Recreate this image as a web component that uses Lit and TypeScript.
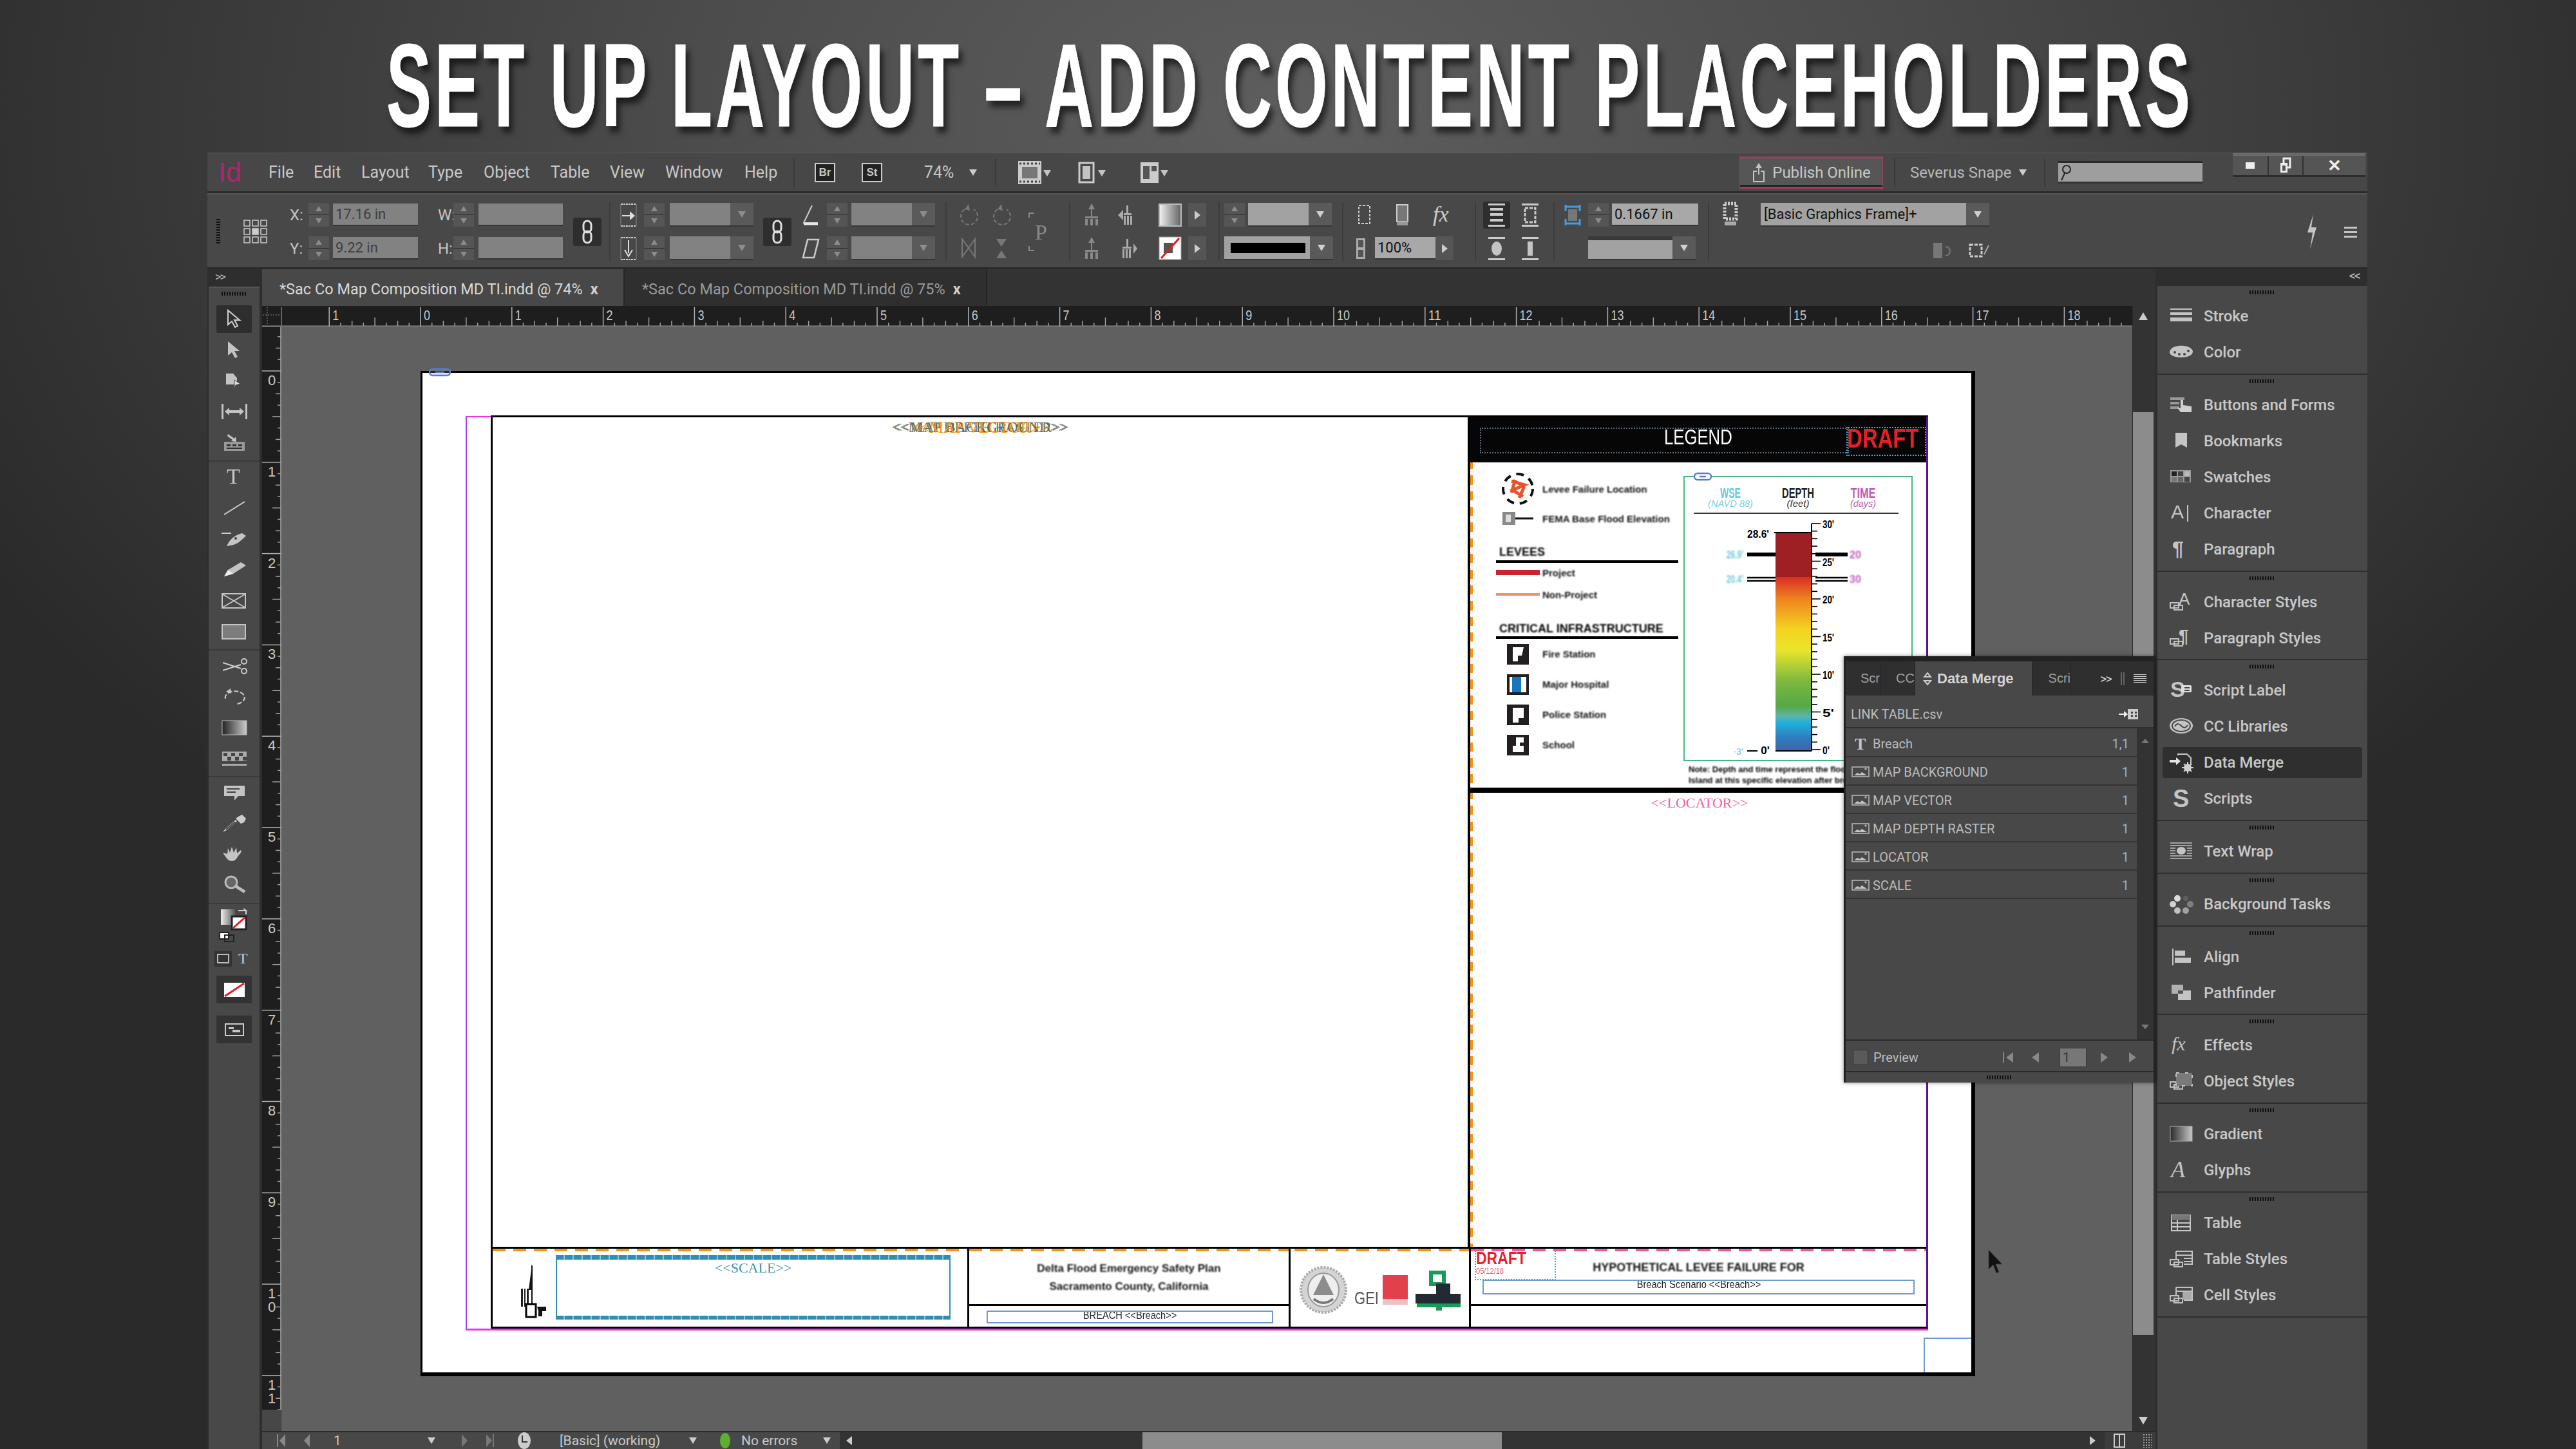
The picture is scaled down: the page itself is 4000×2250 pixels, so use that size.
import { LitElement, html, svg, css, nothing } from "lit";
import { customElement } from "lit/decorators.js";

const ic = (w: number, h: number, body: unknown) =>
  html`<svg class="ico" width=${w} height=${h} viewBox="0 0 ${w} ${h}">${body}</svg>`;

const sq = (x: number, y: number, w = 9, h = 7) =>
  svg`<rect x=${x} y=${y} width=${w} height=${h} fill="none" stroke="#c0c0c0" stroke-width="2"/>`;
const styleBoxes = svg`${sq(1, 15, 13, 8)}${sq(7, 19, 13, 7)}`;

const dockIcons: Record<string, unknown> = {
  stroke: svg`<rect x="1" y="2" width="34" height="2"/><rect x="1" y="8" width="34" height="4"/><rect x="1" y="16" width="34" height="6"/>`,
  color: svg`<path d="M0 13C2 5 14 3 22 4c9 1 14 5 14 9 0 6-9 9-18 9S-1 19 0 13z"/><g fill="#474747"><circle cx="8" cy="14" r="2"/><circle cx="15" cy="17" r="2"/><circle cx="23" cy="17" r="2"/><circle cx="29" cy="12" r="2"/></g>`,
  buttons: svg`<path d="M1 2h22v4H1zM1 9h14v4H1zM1 16h14v4H1z" fill="#999"/><path d="M17 6h4v8l13 2v9H17l-5-7 5 1z" fill="#d0d0d0"/>`,
  bookmark: svg`<path d="M9 1h18v23l-9-5-9 5z"/>`,
  swatches: svg`<rect x="1" y="3" width="32" height="19" fill="#999"/><rect x="3" y="5" width="8" height="7" fill="#222"/><rect x="13" y="5" width="8" height="7" fill="#444"/><rect x="23" y="5" width="8" height="7" fill="#bbb"/><rect x="3" y="14" width="8" height="7" fill="#777"/><rect x="13" y="14" width="8" height="7" fill="#666"/><rect x="23" y="14" width="8" height="7" fill="#444"/>`,
  character: svg`<text x="2" y="22" font-family="Liberation Sans" font-size="30">A</text><rect x="27" y="1" width="2" height="26"/>`,
  paragraph: svg`<text x="4" y="24" font-family="Liberation Sans" font-weight="700" font-size="32">¶</text>`,
  charstyle: svg`${styleBoxes}<text x="14" y="18" font-family="Liberation Sans" font-size="26">A</text>`,
  parastyle: svg`${styleBoxes}<text x="14" y="20" font-family="Liberation Sans" font-weight="700" font-size="28">¶</text>`,
  scriptlabel: svg`<text x="1" y="24" font-family="Liberation Sans" font-weight="700" font-size="34">S</text><rect x="18" y="6" width="16" height="11" rx="2" fill="#e0e0e0"/><rect x="23" y="9" width="8" height="2" fill="#474747"/><rect x="23" y="13" width="8" height="2" fill="#474747"/>`,
  cc: svg`<ellipse cx="18" cy="13" rx="18" ry="12"/><ellipse cx="18" cy="13" rx="14" ry="9" fill="none" stroke="#474747" stroke-width="2"/><path d="M8 14c4-6 7-4 10-1s6 5 10-1" fill="none" stroke="#474747" stroke-width="2"/>`,
  datamerge: svg`<path d="M0 10h10V6l7 6-7 6v-4H0z" fill="#e4e4e4"/><path d="M13 3V1h14l6 6v10" fill="none" stroke="#c8c8c8" stroke-width="2"/><circle cx="28" cy="22" r="6" fill="#d0d0d0"/><circle cx="28" cy="22" r="2" fill="#333"/><path d="M28 13v18M19 22h18M22 16l12 12M34 16L22 28" stroke="#d0d0d0" stroke-width="2"/>`,
  scripts: svg`<text x="5" y="27" font-family="Liberation Sans" font-weight="700" font-size="38">S</text>`,
  textwrap: svg`<g stroke="#c0c0c0" stroke-width="1.5"><path d="M1 1h34M1 5h34M1 9h8M27 9h8M1 13h8M27 13h8M1 17h8M27 17h8M1 21h34M1 25h34"/></g><ellipse cx="18" cy="13" rx="7" ry="6"/>`,
  tasks: svg`<circle cx="12" cy="5" r="5" fill="#dcdcdc"/><circle cx="25" cy="5" r="4" fill="#5f5f5f"/><circle cx="5" cy="14" r="5" fill="#d0d0d0"/><circle cx="32" cy="14" r="5" fill="#808080"/><circle cx="12" cy="24" r="5" fill="#c0c0c0"/><circle cx="25" cy="24" r="5" fill="#a0a0a0"/>`,
  align: svg`<rect x="4" y="1" width="2" height="26"/><rect x="8" y="4" width="16" height="8"/><rect x="8" y="15" width="25" height="8"/>`,
  pathfinder: svg`<rect x="3" y="1" width="18" height="14" fill="#b0b0b0"/><rect x="13" y="10" width="20" height="15" fill="#c4c4c4"/><rect x="13" y="10" width="8" height="5" fill="#555"/>`,
  fx: svg`<text x="3" y="22" font-family="Liberation Serif" font-style="italic" font-size="30">fx</text>`,
  objstyle: svg`${styleBoxes}<rect x="10" y="1" width="25" height="20" fill="#7a7a7a" stroke="#c0c0c0" stroke-dasharray="5 9" stroke-width="2"/>`,
  gradient: svg`<defs><linearGradient id="dg"><stop offset="0" stop-color="#2a2a2a"/><stop offset="1" stop-color="#c8c8c8"/></linearGradient></defs><rect x="1" y="2" width="34" height="23" fill="url(#dg)" stroke="#aaa"/>`,
  glyphs: svg`<text x="2" y="25" font-family="Liberation Serif" font-style="italic" font-size="36">A</text>`,
  table: svg`<rect x="3" y="2" width="29" height="24" fill="none" stroke="#c8c8c8" stroke-width="2"/><rect x="3" y="2" width="29" height="7" fill="#777"/><path d="M3 14h29M3 20h29M12 9v17" stroke="#c8c8c8" stroke-width="2"/>`,
  tablestyle: svg`${styleBoxes}<path d="M10 2h25v20H22M10 2v12M10 8h25M22 13h13M22 18h13" fill="none" stroke="#c0c0c0" stroke-width="2"/>`,
  cellstyle: svg`${styleBoxes}<path d="M10 2h25v20H22M10 2v12M10 8h25" fill="none" stroke="#c0c0c0" stroke-width="2"/><rect x="20" y="9" width="14" height="12" fill="#aaa"/>`,
};

const dockGroups: [string, string][][] = [
  [["stroke", "Stroke"], ["color", "Color"]],
  [["buttons", "Buttons and Forms"], ["bookmark", "Bookmarks"], ["swatches", "Swatches"], ["character", "Character"], ["paragraph", "Paragraph"]],
  [["charstyle", "Character Styles"], ["parastyle", "Paragraph Styles"]],
  [["scriptlabel", "Script Label"], ["cc", "CC Libraries"], ["datamerge", "Data Merge"], ["scripts", "Scripts"]],
  [["textwrap", "Text Wrap"]],
  [["tasks", "Background Tasks"]],
  [["align", "Align"], ["pathfinder", "Pathfinder"]],
  [["fx", "Effects"], ["objstyle", "Object Styles"]],
  [["gradient", "Gradient"], ["glyphs", "Glyphs"]],
  [["table", "Table"], ["tablestyle", "Table Styles"], ["cellstyle", "Cell Styles"]],
];

const toolGroups: unknown[][] = [
  [
    svg`<path d="M10 1v22l6-5 5 9 4-2-5-9h8z" fill="none" stroke="#d0d0d0" stroke-width="2"/>`,
    svg`<path d="M10 1v22l6-5 5 9 4-2-5-9h8z"/>`,
    svg`<path d="M7 3h11l6 7v10H7z"/><path d="M20 13l9 6-7 2-2 6z" fill="#ddd" stroke="#474747"/>`,
    svg`<rect x="0" y="2" width="3" height="24"/><rect x="37" y="2" width="3" height="24"/><path d="M5 14l7-6v4h16V8l7 6-7 6v-4H12v4z"/>`,
    svg`<path d="M4 13h32v14H4z" fill="#999"/><path d="M10 1l10 7 2-3 1 8-8-1 2-2L9 4z"/><path d="M8 17h6v3H8zM17 17h6v3h-6zM26 17h6v3h-6zM8 22h24v2H8z" fill="#333"/>`,
  ],
  [
    svg`<text x="8" y="25" font-family="Liberation Serif" font-size="34">T</text>`,
    svg`<path d="M4 25L36 5" stroke="#d0d0d0" stroke-width="2"/>`,
    svg`<path d="M0 6h15" stroke="#ccc" stroke-width="2"/><path d="M10 22c6-10 14-14 22-16l6 4c-6 6-14 14-24 15l-6 1z"/><circle cx="22" cy="14" r="2" fill="#474747"/>`,
    svg`<path d="M4 25l6-10L30 3l8 5-20 13z"/><path d="M4 25l6-10 8 6z" fill="#eee"/>`,
    svg`<rect x="1" y="4" width="36" height="22" fill="none" stroke="#c4c4c4" stroke-width="2"/><path d="M2 5l34 20M36 5L2 25" stroke="#c4c4c4" stroke-width="2"/>`,
    svg`<rect x="1" y="4" width="36" height="22" fill="#7c7c7c" stroke="#c4c4c4" stroke-width="2"/>`,
  ],
  [
    svg`<path d="M2 10l28 9M2 22l28-9" stroke="#ccc" stroke-width="2"/><circle cx="35" cy="8" r="4" fill="none" stroke="#ccc" stroke-width="2"/><circle cx="35" cy="23" r="4" fill="none" stroke="#ccc" stroke-width="2"/>`,
    svg`<path d="M6 18A15 10 0 1 1 24 26" fill="none" stroke="#ccc" stroke-width="2" stroke-dasharray="7 3"/><path d="M14 2l-7 5 8 3z"/>`,
    svg`<defs><linearGradient id="tg"><stop offset="0" stop-color="#222"/><stop offset="1" stop-color="#ccc"/></linearGradient></defs><rect x="1" y="4" width="38" height="22" fill="url(#tg)" stroke="#bbb"/>`,
    svg`<rect x="1" y="4" width="38" height="22" fill="#aaa"/><g fill="#444"><rect x="3" y="6" width="6" height="5"/><rect x="15" y="6" width="6" height="5"/><rect x="27" y="6" width="6" height="5"/><rect x="9" y="12" width="6" height="6"/><rect x="21" y="12" width="6" height="6"/><rect x="33" y="12" width="6" height="6"/><rect x="1" y="19" width="38" height="4"/></g>`,
  ],
  [
    svg`<path d="M4 4h32v16H26l-6 7V20H4z"/><path d="M8 9h20M8 14h14" stroke="#444" stroke-width="2"/>`,
    svg`<path d="M26 4l6-3 6 6-3 6-5 2-8-8zM22 9L6 23l-4 5 6-3 16-14" fill="#ccc"/><path d="M21 12L7 24" stroke="#474747" stroke-width="2"/>`,
    svg`<path d="M2 12l7 2 1-9 3 7 3-9 3 9 4-8 1 9 6-5c2 3-2 6-4 9-3 4-4 8-10 8-6 0-8-4-14-13z"/>`,
    svg`<circle cx="15" cy="10" r="9" fill="#666" stroke="#bbb" stroke-width="3"/><path d="M22 16l14 9" stroke="#bbb" stroke-width="5"/>`,
  ],
];

@customElement("id-panel")
export class IdPanel extends LitElement {
  static styles = css`
    :host {
      position: absolute;
      left: 2541px;
      top: 782px;
      width: 484px;
      height: 662px;
      background: #484848;
      border: solid #222;
      border-width: 8px 3px 0 3px;
      box-sizing: border-box;
      display: flex;
      flex-direction: column;
      font: 400 20px Roboto, sans-serif;
      color: #bcbcbc;
      box-shadow: 0 0 6px rgba(0, 0, 0, 0.5);
    }
    .tabs {
      height: 53px;
      background: #2f2f2f;
      display: flex;
      align-items: center;
      flex: none;
    }
    .tab {
      height: 100%;
      display: flex;
      align-items: center;
      justify-content: flex-end;
      box-sizing: border-box;
      overflow: hidden;
      border-right: 1px solid #242424;
      color: #a0a0a0;
      font-family: "Liberation Sans", sans-serif;
      font-size: 20px;
      white-space: nowrap;
    }
    .t1 { width: 54px; }
    .t2 { width: 54px; }
    .t3 { width: 182px; background: #484848; justify-content: flex-start; padding-left: 13px; gap: 9px; color: #d4d4d4; font-weight: 700; font-size: 22px; }
    .t4 { width: 60px; margin-right: 45px; }
    .more { color: #ccc; font-size: 20px; width: 24px; letter-spacing: -2px; }
    .bars { width: 2px; height: 20px; border-left: 2px solid #666; border-right: 2px solid #666; margin: 0 14px 0 8px; }
    .menu { width: 20px; height: 13px; background: repeating-linear-gradient(180deg, #ccc 0 1px, transparent 1px 3px); }
    .file {
      height: 51px;
      display: flex;
      align-items: center;
      justify-content: space-between;
      padding: 8px 24px 0 8px;
      border-bottom: 2px solid #2f2f2f;
      flex: none;
      box-sizing: border-box;
    }
    .body { flex: 1; display: flex; min-height: 0; }
    .list { flex: 1; padding-top: 1px; }
    .row {
      height: 44px;
      box-sizing: border-box;
      border-bottom: 2px solid #353535;
      display: grid;
      grid-template-columns: 33px 1fr auto;
      align-items: center;
      padding: 3px 12px 0 9px;
    }
    .row .ct { color: #8fb4d8; }
    .sb {
      width: 26px;
      background: #333;
      display: flex;
      flex-direction: column;
      justify-content: space-between;
      align-items: center;
      padding: 10px 0;
      box-sizing: border-box;
    }
    .up, .dn { width: 0; height: 0; border: 6px solid transparent; }
    .up { border-bottom: 7px solid #777; }
    .dn { border-top: 7px solid #777; }
    .foot {
      height: 51px;
      border-top: 2px solid #2a2a2a;
      border-bottom: 2px solid #2a2a2a;
      display: flex;
      align-items: center;
      padding: 4px 0 0 11px;
      flex: none;
      box-sizing: border-box;
    }
    .chk { width: 22px; height: 22px; background: #5a5a5a; border: 1px solid #2c2c2c; margin-right: 8px; flex: none; }
    .nav { display: grid; grid-template-columns: 44px 44px 62px 44px 40px; align-items: center; margin-left: 131px; }
    .pg { width: 42px; height: 30px; background: #777; border: 1px solid #3a3a3a; color: #333; font-size: 20px; padding-left: 4px; box-sizing: border-box; line-height: 28px; }
    .grip { height: 16px; display: flex; justify-content: center; align-items: center; flex: none; }
    .grip i { width: 40px; height: 6px; background: repeating-linear-gradient(90deg, #111 0 2px, transparent 2px 4px); }
    .ico { fill: #c4c4c4; display: block; overflow: visible; }
  `;

  render() {
    const img = ic(28, 17, svg`<rect x="1" y="1" width="26" height="15" fill="none" stroke="#bbb" stroke-width="1.5"/><path d="M4 14l5-4 4 2 3-3 8 5z"/><path d="M20 4h4M22 2v4" stroke="#ccc"/>`);
    const rows = ["MAP BACKGROUND", "MAP VECTOR", "MAP DEPTH RASTER", "LOCATOR", "SCALE"];
    return html`
      <div class="tabs">
        <div class="tab t1">Scr</div>
        <div class="tab t2">CC</div>
        <div class="tab t3">
          ${ic(12, 20, svg`<path d="M6 1l5 6H1zM6 19l5-6H1z" fill="none" stroke="#ccc" stroke-width="2"/>`)}Data Merge
        </div>
        <div class="tab t4">Scri</div>
        <span class="more">&gt;&gt;</span><i class="bars"></i><i class="menu"></i>
      </div>
      <div class="file">
        <span>LINK TABLE.csv</span>
        ${ic(30, 16, svg`<path d="M0 7h8V3l6 5-6 5V9H0z" fill="#eee"/><rect x="14" y="0" width="16" height="16" fill="#ccc"/><path d="M19 4h3v3h-3zM25 4h3v3h-3zM19 9h3v3h-3zM25 9h3v3h-3z" fill="#444"/>`)}
      </div>
      <div class="body">
        <div class="list">
          <div class="row">
            ${ic(28, 24, svg`<text x="5" y="21" font-family="Liberation Serif" font-weight="700" font-size="26">T</text>`)}
            <span>Breach</span><span class="ct">1,1</span>
          </div>
          ${rows.map((r) => html`<div class="row">${img}<span>${r}</span><span class="ct">1</span></div>`)}
        </div>
        <div class="sb"><i class="up"></i><i class="dn"></i></div>
      </div>
      <div class="foot">
        <i class="chk"></i><span>Preview</span>
        <div class="nav">
          ${ic(18, 16, svg`<rect width="2" height="16" fill="#888"/><path d="M16 0v16L5 8z" fill="#888"/>`)}
          ${ic(14, 16, svg`<path d="M12 0v16L1 8z" fill="#888"/>`)}
          <div class="pg">1</div>
          ${ic(14, 16, svg`<path d="M2 0v16l11-8z" fill="#888"/>`)}
          ${ic(18, 16, svg`<path d="M2 0v16l11-8z" fill="#888"/>`)}
        </div>
      </div>
      <div class="grip"><i></i></div>
    `;
  }
}

@customElement("map-sheet")
export class MapSheet extends LitElement {
  static styles = css`
    :host {
      display: block;
      width: 2414px;
      height: 1561px;
      box-sizing: border-box;
      background: #fff;
      border: solid #000;
      border-width: 3px 6px 6px 3px;
      position: relative;
      color: #000;
      font-family: "Liberation Sans", sans-serif;
    }
    .pagelink { position: absolute; left: 10px; top: -8px; }
    .corner { position: absolute; right: 0; bottom: 0; width: 72px; height: 52px; border: solid #6f9ad0; border-width: 2px 0 0 2px; }
    .guide {
      margin: 67px 0 0 67px;
      width: 2271px;
      height: 1420px;
      box-sizing: border-box;
      border: solid #f030e0;
      border-width: 2px 0 3px 0;
      border-left: 2px solid #a040ff;
      padding-left: 37px;
    }
    .frame {
      margin-top: -3px;
      width: 2232px;
      height: 1418px;
      box-sizing: border-box;
      border: 3px solid #000;
      border-right-color: #5a10a0;
      display: flex;
      flex-direction: column;
    }
    .top { height: 1288px; display: flex; border-bottom: 3px solid #000; flex: none; }
    .map { width: 1514px; border-right: 4px solid #000; display: grid; justify-items: center; align-content: start; padding-top: 2px; flex: none; }
    .map span { grid-area: 1 / 1; font: 23px "Liberation Serif", serif; white-space: nowrap; align-self: center; }
    .mbg { color: #4f6d60; }
    .mra { color: #7a7468; }
    .map .mve { color: #f7941d; font-size: 25px; }
    .right { flex: 1; display: flex; flex-direction: column; min-width: 0; }
    .lhead { height: 70px; background: #060606; position: relative; display: flex; justify-content: center; align-items: center; flex: none; }
    .lhead b { font: 400 33px "Liberation Sans", sans-serif; color: #fff; margin-top: -9px; transform: scaleX(0.78); }
    .draft { position: absolute; right: 12px; top: 12px; font: 700 42px/42px "Liberation Sans", sans-serif; color: #ee1c25; transform: scaleX(0.78); transform-origin: right center; }
    .dot1 { position: absolute; left: 15px; top: 16px; width: 569px; height: 36px; border: 2px dotted #5a6a78; }
    .dot2 { position: absolute; left: 584px; top: 15px; width: 124px; height: 45px; border: 2px dotted #28b4d8; box-sizing: border-box; }
    .lbody { height: 505px; display: flex; flex: none; border-left: 4px solid transparent; border-image: repeating-linear-gradient(180deg, #f7941d 0 14px, transparent 14px 24px) 4; overflow: hidden; }
    .lcol { width: 312px; padding: 18px 0 0 36px; box-sizing: border-box; flex: none; }
    .chart { margin-top: 13px; flex: none; }
    .lrow { display: flex; align-items: center; gap: 4px; height: 46px; }
    .lrow .sw { width: 68px; display: flex; justify-content: center; flex: none; }
    .bl { filter: blur(1.1px); font-weight: 700; font-size: 15px; white-space: nowrap; color: #111; }
    .lhd { font-weight: 700; font-size: 18px; border-bottom: 4px solid #000; padding-left: 5px; height: 27px; box-sizing: border-box; width: 283px; white-space: nowrap; }
    .lhd span { filter: blur(0.8px); display: block; }
    .m1 { margin-top: 19px; }
    .m2 { margin-top: 20px; height: 30px; padding-top: 4px; }
    .h30 { height: 30px; }
    .h38 { height: 38px; }
    .h47 { height: 47px; }
    .lbar { height: 8px; background: #000; flex: none; }
    .loc { flex: 1; display: flex; justify-content: center; padding-top: 3px; border-left: 4px solid transparent; border-image: repeating-linear-gradient(180deg, #f7941d 0 14px, transparent 14px 24px) 4; }
    .loc span { font: 22px "Liberation Serif", serif; color: #f0609c; }
    .bottom { flex: 1; display: flex; min-height: 0; position: relative; }
    .cell { flex: none; box-sizing: border-box; border-right: 3px solid #000; position: relative; }
    .cell::before { content: ""; display: block; height: 4px; margin-top: 0; background: repeating-linear-gradient(90deg, #f7941d 0 20px, transparent 20px 32px); }
    .pink::before { background: repeating-linear-gradient(90deg, #ee5aa0 0 20px, transparent 20px 32px); }
    .c1 { width: 740px; display: flex; flex-wrap: wrap; align-content: flex-start; }
    .c1::before { width: 100%; }
    .north { margin: 16px 0 0 30px; width: 68px; }
    .scale {
      width: 613px;
      height: 100px;
      margin-top: 6px;
      box-sizing: border-box;
      border: 2px solid #2e8fb0;
      border-top: 7px solid transparent;
      border-bottom: 6px solid transparent;
      border-image: repeating-linear-gradient(90deg, #2e8fb0 0 12px, #8cc4d8 12px 14px) 7 2 6 2;
      text-align: center;
      font: 22px "Liberation Serif", serif;
      color: #3a92b4;
    }
    .c2 { width: 499px; }
    .c3 { width: 280px; padding: 0 0 0 6px; display: flex; flex-direction: column; }
    .logos { filter: blur(0.4px); }
    .c4 { flex: 1; border-right: 0; }
    .cap { height: 82px; box-sizing: content-box; border-bottom: 3px solid #000; text-align: center; }
    .cap .bl { font-size: 17px; line-height: 28px; display: block; }
    .c2 .cap { padding-top: 13px; height: 69px; }
    .c4 .cap { padding-top: 13px; height: 69px; }
    .c4 .cap .bl { font-size: 18px; line-height: 24px; }
    .box { border: 2px solid #6f9ad0; text-align: center; font: 17px "Liberation Sans", sans-serif; overflow: hidden; box-sizing: border-box; color: #222; white-space: nowrap; }
    .box span { display: inline-block; transform: scaleX(0.86); }
    .b1 { width: 445px; height: 20px; margin: 7px 0 0 27px; position: relative; background: #fff; line-height: 12px; }
    .b2 { width: 671px; height: 23px; margin: -41px 0 0 18px; position: relative; line-height: 11px; }
    .stamp { position: absolute; left: 6px; top: 3px; width: 126px; height: 46px; border: 2px dotted #28b4d8; border-width: 0 2px 2px 2px; box-sizing: border-box; color: #ee1c25; }
    .stamp b { display: block; font: 700 27px/25px "Liberation Sans", sans-serif; transform: scaleX(0.85); transform-origin: left; }
    .stamp span { display: block; font: 13px/14px "Liberation Sans", sans-serif; color: #e85a70; transform: scaleX(0.85); transform-origin: left; }
  `;

  private chart() {
    const ticks = [];
    for (let i = 0; i <= 30; i++) {
      const y = 1163 - i * 11.7;
      const major = i % 5 === 0;
      ticks.push(svg`<path d="M2814 ${y}h${major ? 14 : 9}" stroke="#000" stroke-width="1.6"/>`);
      if (major) ticks.push(svg`<text x="2831" y=${y + 7} font-size="17" font-weight="700" textLength=${i ? 18 : 11} lengthAdjust="spacingAndGlyphs" text-anchor="start">${i}'</text>`);
    }
    const grad = [
      [0, "#d92d27"], [0.13, "#f0851e"], [0.3, "#f4d31f"], [0.42, "#e9e62a"], [0.6, "#7db83f"], [0.74, "#55a846"], [0.8, "#5cb3a5"], [0.84, "#1fb0dd"], [0.92, "#2f7fc0"], [1, "#3a64ab"],
    ];
    return html`<svg class="chart" width="391" height="492" viewBox="2600 730 391 492" font-family="Liberation Sans" text-anchor="middle">
      <defs><linearGradient id="rmp" x1="0" y1="0" x2="0" y2="1">${grad.map((g) => svg`<stop offset=${g[0]} stop-color=${g[1]}/>`)}</linearGradient></defs>
      <rect x="2616" y="739" width="354" height="441" fill="#fff" stroke="#44b97e" stroke-width="2"/>
      <g fill="none" stroke="#5a7ccc" stroke-width="2.5"><rect x="2632" y="734" width="26" height="10" rx="5" fill="#fff"/><path d="M2640 739h10"/></g>
      <g font-weight="700" font-size="22">
        <text x="2688" y="772" fill="#6bcad8" textLength="32" lengthAdjust="spacingAndGlyphs">WSE</text>
        <text x="2793" y="772" fill="#222" textLength="50" lengthAdjust="spacingAndGlyphs">DEPTH</text>
        <text x="2894" y="772" fill="#c25bb4" textLength="39" lengthAdjust="spacingAndGlyphs">TIME</text>
      </g>
      <g font-size="15" font-style="italic">
        <text x="2688" y="786" fill="#7ccedb" textLength="70" lengthAdjust="spacingAndGlyphs">(NAVD 88)</text>
        <text x="2793" y="786" fill="#333" textLength="35" lengthAdjust="spacingAndGlyphs">(feet)</text>
        <text x="2894" y="786" fill="#c25bb4" textLength="40" lengthAdjust="spacingAndGlyphs">(days)</text>
      </g>
      <path d="M2631 796h318" stroke="#333" stroke-width="2"/>
      <rect x="2758" y="826" width="56" height="69" fill="#9e2024"/>
      <rect x="2758" y="895" width="56" height="270" fill="url(#rmp)"/>
      <path d="M2814 812v353M2756 826h58M2758 1165h56" stroke="#000" stroke-width="2"/>
      ${ticks}
      <text x="2731" y="834" font-size="17" font-weight="700" textLength="34" lengthAdjust="spacingAndGlyphs">28.6'</text>
      <path d="M2714 860h44M2820 860h50" stroke="#000" stroke-width="6"/>
      <path d="M2714 896h44M2714 901h44M2820 896h50M2820 901h50" stroke="#000" stroke-width="2.5"/>
      <g style="filter:blur(.9px)" font-weight="700" font-size="16">
        <text x="2695" y="866" fill="#6bcad8" textLength="26" lengthAdjust="spacingAndGlyphs">26.9'</text>
        <text x="2695" y="904" fill="#6bcad8" textLength="26" lengthAdjust="spacingAndGlyphs">20.4'</text>
        <text x="2882" y="866" fill="#c25bb4">20</text>
        <text x="2882" y="904" fill="#c25bb4">30</text>
      </g>
      <text x="2700" y="1171" font-size="14" fill="#6bcad8">-3'</text>
      <path d="M2714 1165h16" stroke="#000" stroke-width="2"/>
      <text x="2742" y="1170" font-size="17" font-weight="700">0'</text>
      <g style="filter:blur(1px)" font-size="13" font-weight="700" text-anchor="start">
        <text x="2623" y="1198">Note: Depth and time represent the flood</text>
        <text x="2623" y="1215">Island at this specific elevation after breach</text>
      </g>
    </svg>`;
  }

  render() {
    const box = (inner: unknown, blue = false) => html`<svg width="34" height="32" viewBox="0 0 34 32">
      <rect width="34" height="32" fill="#231f20"/>
      ${blue ? svg`<rect x="4" y="4" width="26" height="24" fill="#fff"/><rect x="8" y="4" width="14" height="24" fill="#1b75bc"/>` : inner}
    </svg>`;
    return html`
      <svg class="pagelink" width="34" height="14" viewBox="0 0 34 14"><g fill="none" stroke="#5a7ccc" stroke-width="2.5"><rect x="1" y="2" width="32" height="10" rx="5" fill="#8a9ccc" fill-opacity=".25"/><path d="M10 7h14"/></g></svg>
      <div class="guide">
        <div class="frame">
          <div class="top">
            <div class="map">
              <span class="mra">&lt;&lt;MAP DEPTH RASTER&gt;&gt;</span>
              <span class="mbg">&lt;&lt;MAP BACKGROUND&gt;&gt;</span>
              <span class="mve">&lt;&lt;MAP VECTOR&gt;&gt;</span>
            </div>
            <div class="right">
              <div class="lhead">
                <i class="dot1"></i><i class="dot2"></i>
                <b>LEGEND</b><span class="draft">DRAFT</span>
              </div>
              <div class="lbody">
                <div class="lcol">
                  <div class="lrow">
                    <div class="sw">
                      <svg width="52" height="52" viewBox="0 0 52 52"><circle cx="26" cy="26" r="23" fill="none" stroke="#111" stroke-width="4" stroke-dasharray="12 9"/><path d="M16 14l20 6-18 8 16 10M22 12l-6 20M36 22l-8 18" fill="none" stroke="#e8532b" stroke-width="5"/></svg>
                    </div>
                    <span class="bl">Levee Failure Location</span>
                  </div>
                  <div class="lrow">
                    <div class="sw">
                      <svg width="48" height="20" viewBox="0 0 48 20"><rect width="20" height="20" fill="#888"/><rect x="5" y="4" width="8" height="12" fill="#ddd"/><path d="M20 10h28" stroke="#111" stroke-width="3"/></svg>
                    </div>
                    <span class="bl">FEMA Base Flood Elevation</span>
                  </div>
                  <div class="lhd m1"><span>LEVEES</span></div>
                  <div class="lrow h30"><div class="sw"><svg width="68" height="8"><rect width="68" height="8" fill="#c9252c"/></svg></div><span class="bl">Project</span></div>
                  <div class="lrow h38"><div class="sw"><svg width="68" height="4"><rect width="68" height="4" fill="#f0936f"/></svg></div><span class="bl">Non-Project</span></div>
                  <div class="lhd m2"><span>CRITICAL INFRASTRUCTURE</span></div>
                  <div class="lrow h47"><div class="sw">${box(svg`<path d="M9 5h17l-3 13h-6v9H9z" fill="#fff"/>`)}</div><span class="bl">Fire Station</span></div>
                  <div class="lrow h47"><div class="sw">${box(nothing, true)}</div><span class="bl">Major Hospital</span></div>
                  <div class="lrow h47"><div class="sw">${box(svg`<path d="M9 5h17v16h-8v7H9z" fill="#fff"/>`)}</div><span class="bl">Police Station</span></div>
                  <div class="lrow h47"><div class="sw">${box(svg`<path d="M14 4h12v8h-6v5h6v10H9V17h5z" fill="#fff"/>`)}</div><span class="bl">School</span></div>
                </div>
                ${this.chart()}
              </div>
              <div class="lbar"></div>
              <div class="loc"><span>&lt;&lt;LOCATOR&gt;&gt;</span></div>
            </div>
          </div>
          <div class="bottom">
            <div class="cell c1">
              <svg class="north" width="46" height="88" viewBox="0 0 46 88"><path d="M20 6v74" stroke="#111" stroke-width="2"/><path d="M20 4l-5 40h5z" fill="#111"/><path d="M3 42h3v28H3zM8 42h2v28H8zM12 42h3v28h-3z" fill="#222"/><rect x="11" y="66" width="15" height="20" fill="#fff" stroke="#000" stroke-width="3"/><path d="M28 70h14v7h-6v8h-6v-8z" fill="#111"/></svg>
              <div class="scale">&lt;&lt;SCALE&gt;&gt;</div>
            </div>
            <div class="cell c2">
              <div class="cap">
                <span class="bl">Delta Flood Emergency Safety Plan</span>
                <span class="bl">Sacramento County, California</span>
              </div>
              <div class="box b1"><span>BREACH &lt;&lt;Breach&gt;&gt;</span></div>
            </div>
            <div class="cell c3">
              <svg class="logos" width="270" height="100" viewBox="0 0 270 100">
                <ellipse cx="45" cy="60" rx="35" ry="35" fill="#d4d4d4" stroke="#aaa" stroke-width="4" stroke-dasharray="3 2"/>
                <ellipse cx="45" cy="60" rx="24" ry="26" fill="#eee" stroke="#999" stroke-width="2"/>
                <path d="M45 36l16 32H29z" fill="#8c8c8c"/><path d="M30 74c10 8 20 8 30 0" fill="none" stroke="#777" stroke-width="4"/>
                <text x="93" y="82" font-size="28" fill="#555" textLength="38" lengthAdjust="spacingAndGlyphs">GEI</text>
                <rect x="137" y="37" width="39" height="37" fill="#e2404a"/><rect x="137" y="74" width="39" height="9" fill="#eec0c0"/>
                <path d="M212 33h20v18h-20z" fill="none" stroke="#1a9a5a" stroke-width="6"/>
                <path d="M220 50h22v16h-22z" fill="#222a33"/><rect x="188" y="66" width="70" height="15" fill="#222a33"/>
                <rect x="190" y="81" width="68" height="6" fill="#1a9a5a"/><path d="M220 87h9v5h-9z" fill="#1a9a5a"/>
              </svg>
            </div>
            <div class="cell c4 pink">
              <div class="stamp"><b>DRAFT</b><span>05/12/18</span></div>
              <div class="cap"><span class="bl">HYPOTHETICAL LEVEE FAILURE FOR</span></div>
              <div class="box b2"><span>Breach Scenario &lt;&lt;Breach&gt;&gt;</span></div>
            </div>
          </div>
        </div>
      </div>
      <i class="corner"></i>
    `;
  }
}

@customElement("app-root")
export class AppRoot extends LitElement {
  static styles = css`
    :host {
      display: block;
      width: 4000px;
      height: 2250px;
      overflow: hidden;
      background: radial-gradient(ellipse 2300px 1500px at 2000px 180px, #5e5e5e 0%, #4c4c4c 40%, #2a2a2a 100%);
      font-family: Roboto, "Liberation Sans", sans-serif;
      color: #c8c8c8;
    }
    .banner { height: 237px; box-sizing: border-box; }
    .banner h1 {
      margin: 0 0 0 600px;
      width: 2798px;
      font: 700 184px/184px "Liberation Sans", sans-serif;
      letter-spacing: 9px;
      -webkit-text-stroke: 1px #fff;
      color: #fff;
      white-space: nowrap;
      padding-top: 40px;
      text-shadow: 10px 10px 12px rgba(0, 0, 0, 0.6);
      transform: scaleX(0.57);
      transform-origin: left top;
    }
    .win { margin-left: 322px; width: 3354px; height: 2013px; position: relative; background: #474747; display: flex; flex-direction: column; }

    /* menu bar */
    .menubar {
      height: 63px;
      box-sizing: border-box;
      border-bottom: 3px solid #2a2a2a;
      border-top: 1px solid #5a5a5a;
      display: grid;
      grid-template-columns: 76px 70px 74px 104px 86px 104px 92px 86px 123px 76px 33px 73px 97px 70px 40px 35px 93px 97px 931px 240px 25px 169px 39px 22px 271px 206px;
      padding-left: 19px;
      align-items: center;
      font-size: 25px;
      flex: none;
    }
    .idlogo { font: 400 43px "Liberation Sans", sans-serif; color: #b3246a; margin-left: -2px; }
    .msep { width: 2px; height: 44px; background: #3a3a3a; }
    .bridge { width: 32px; height: 30px; box-sizing: border-box; border: 2px solid #ccc; background: #222; color: #c8c8c8; font: 700 17px/26px "Liberation Sans", sans-serif; text-align: center; }
    .pub {
      width: 223px;
      height: 50px;
      box-sizing: border-box;
      border-top: 3px solid #a63a63;
      border-bottom: 3px solid #a63a63;
      border-left: 1px solid #a63a63;
      border-right: 1px solid #a63a63;
      box-shadow: inset 0 -3px 0 #222;
      background: #565656;
      display: flex;
      align-items: center;
      justify-content: center;
      gap: 10px;
      font-size: 24px;
      white-space: nowrap;
    }
    .user { font-size: 24px; color: #b8b8b8; white-space: nowrap; }
    .search { width: 221px; background: #9e9e9e; border-top: 3px solid #2a2a2a; border-bottom: 3px solid #333; box-sizing: content-box; display: flex; align-items: center; padding-left: 3px; height: 29px; }
    .winctl { align-self: start; margin-top: -1px; width: 206px; height: 38px; background: #555; border-bottom: 3px solid #2c2c2c; display: grid; grid-template-columns: 56px 54px 1fr; box-sizing: border-box; border-top: 5px solid #6a6a6a; }
    .winctl > div { display: flex; align-items: center; justify-content: center; border-right: 2px solid #333; color: #eee; font-size: 26px; font-weight: 700; }
    .winctl > .close { border-right: 0; }

    /* control bar */
    .ctl {
      height: 118px;
      box-sizing: border-box;
      border-bottom: 3px solid #2a2a2a;
      border-top: 2px solid #565656;
      background: #484848;
      padding: 13px 0 0 13px;
      display: grid;
      grid-auto-flow: column;
      grid-template-rows: 37px 37px;
      row-gap: 15px;
      grid-template-columns: 43px 72px 29px 38px 163px 24px 39px 147px 56px 17px 37px 40px 145px 60px 39px 38px 146px 22px 51px 56px 63px 20px 55px 64px 46px 47px 9px 183px 21px 185px 13px 52px 57px 16px 38px 186px 25px 57px 369px 477px 60px 30px;
      align-items: center;
      font-size: 22px;
      flex: none;
    }
    .s2 { grid-row: span 2; }
    .sep { width: 2px; height: 92px; background: #3c3c3c; }
    .lbl { font-size: 24px; color: #c4c4c4; }
    .step { width: 32px; height: 37px; display: flex; flex-direction: column; gap: 1px; background: #2e2e2e; }
    .step i { flex: 1; background: #555; display: flex; align-items: center; justify-content: center; }
    .step i::after { content: ""; border: 5px solid transparent; }
    .step .u::after { border-bottom: 8px solid #8c8c8c; border-top: 0; }
    .step .d::after { border-top: 8px solid #8c8c8c; border-bottom: 0; }
    .fld { height: 33px; width: 128px; background: #828282; border-bottom: 2px solid #353535; padding-left: 4px; box-sizing: content-box; display: flex; align-items: center; color: #3e3e3e; font-size: 22px; white-space: nowrap; }
    .fld.w { width: 131px; padding: 0; }
    .fld.on { background: #a8a8a8; color: #111; width: 130px; }
    .fld.pct { width: 94px; }
    .inline { display: flex; gap: 5px; align-items: center; }
    .sel { height: 35px; display: flex; border-bottom: 2px solid #353535; width: 130px; background: #5a5a5a; }
    .sel.lt > div:first-child { background: #a2a2a2; }
    .sel > div:first-child { flex: 1; background: #828282; color: #111; font-size: 22px; padding-left: 5px; display: flex; align-items: center; white-space: nowrap; overflow: hidden; }
    .sel > i { width: 36px; display: flex; align-items: center; justify-content: center; }
    .sel > i::after { content: ""; border: 6px solid transparent; border-top: 10px solid #cfcfcf; border-bottom: 0; }
    .sel.dm > i::after { border-top-color: #8c8c8c; }
    .sel.w169 { width: 169px; }
    .sel.w167 { width: 167px; }
    .sel.w355 { width: 355px; }
    .sel > div.rule { box-shadow: inset 0 6px 0 #3a3a3a; }
    .chain { width: 44px; height: 44px; background: #2e2e2e; border-radius: 3px; display: flex; align-items: center; justify-content: center; }
    .swatch { width: 36px; height: 36px; background: linear-gradient(90deg, #eee, #666); box-sizing: border-box; border: 2px solid #bbb; }
    .arrbtn { width: 28px; height: 37px; background: #555; display: flex; align-items: center; justify-content: center; }
    .arrbtn::after { content: ""; border: 7px solid transparent; border-left: 9px solid #ccc; border-right: 0; }
    .arrbtn.pull { margin-left: -18px; }
    .ico { fill: #c4c4c4; display: block; overflow: visible; }
    .selbg { background: #2e2e2e; border-radius: 3px; width: 42px; height: 42px; display: flex; align-items: center; justify-content: center; }
    .ibox { width: 42px; height: 42px; display: flex; align-items: center; justify-content: center; }
    .kfill { display: block; width: 116px; height: 16px; background: #000; margin-left: 5px; }
    .fxrow { display: flex; align-items: center; gap: 32px; padding-left: 2px; }
    .pctrow { display: flex; align-items: center; gap: 14px; }
    .endrow { display: flex; align-items: center; justify-content: flex-end; gap: 20px; width: 355px; padding-top: 6px; }

    /* main area */
    .main { flex: 1; display: flex; min-height: 0; }
    .left { width: 85px; background: #2e2e2e; padding-left: 2px; flex: none; display: flex; flex-direction: column; box-sizing: border-box; }
    .lefthead { height: 27px; color: #bbb; font-size: 18px; padding-left: 10px; letter-spacing: -2px; line-height: 24px; flex: none; }
    .tools { width: 79px; flex: 1; background: #484848; display: flex; flex-direction: column; align-items: center; border-top: 2px solid #555; box-sizing: border-box; }
    .grip { width: 40px; height: 6px; flex: none; background: repeating-linear-gradient(90deg, #111 0 2px, transparent 2px 4px); }
    .tools > .grip { margin: 6px 0 13px; }
    .tg { width: 100%; display: flex; flex-direction: column; align-items: center; border-bottom: 2px solid #3a3a3a; padding-bottom: 3px; }
    .tool { width: 55px; height: 48px; display: flex; align-items: center; justify-content: center; flex: none; }
    .tool.on { background: #2e2e2e; height: 43px; margin: 2px 0 3px; border-radius: 2px; }
    .fs { height: 100px; width: 100%; }
    .dbox { width: 55px; height: 43px; background: #333; display: flex; align-items: center; justify-content: center; margin-top: 19px; flex: none; }
    .dbox.first { margin-top: 11px; }

    .center { flex: 1; display: flex; flex-direction: column; min-width: 0; }
    .tabs { height: 57px; background: #333; display: flex; flex: none; }
    .tab { width: 563px; height: 100%; display: flex; align-items: center; gap: 12px; padding: 4px 0 0 27px; box-sizing: border-box; font-size: 23.5px; white-space: nowrap; color: #9a9a9a; background: #2f2f2f; border-right: 2px solid #262626; }
    .tab.on { background: #484848; color: #d8d8d8; }
    .tab b { color: #d0d0d0; }
    .doc { flex: 1; display: flex; min-height: 0; }
    .docl { width: 2904px; display: flex; flex-direction: column; flex: none; }
    .hr { height: 33px; background: #1e1e1e; flex: none; display: block; }
    .work { flex: 1; display: flex; min-height: 0; }
    .vr { width: 30px; background: #1e1e1e; flex: none; display: block; }
    .canvas { flex: 1; background: #606060; padding: 68px 0 0 216px; position: relative; overflow: hidden; min-width: 0; }
    .cursor { position: absolute; left: 2648px; top: 1432px; }
    .vs { width: 36px; background: #333; border-left: 1px solid #2a2a2a; flex: none; box-sizing: border-box; padding-right: 3px; position: relative; }
    .vs .thumb { position: absolute; left: 0; right: 3px; top: 165px; height: 1433px; background: #8c8c8c; }
    .vs i { position: absolute; left: 9px; border: 7px solid transparent; }
    .vs .up { top: 10px; border-bottom: 12px solid #ccc; border-top: 0; }
    .vs .dn { bottom: 10px; border-top: 12px solid #ccc; border-bottom: 0; }
    .status { height: 28px; display: flex; background: #333; flex: none; border-top: 2px solid #2a2a2a; box-sizing: border-box; }
    .sl {
      width: 897px;
      background: #484848;
      display: grid;
      grid-template-columns: 40px 48px 146px 52px 38px 49px 66px 201px 48px 33px 127px 26px;
      padding-left: 23px;
      box-sizing: border-box;
      align-items: center;
      font-size: 21px;
      flex: none;
      white-space: nowrap;
    }
    .strack { flex: 1; display: flex; align-items: center; position: relative; }
    .sthumb { position: absolute; left: 470px; width: 558px; top: 0; bottom: 0; background: #8c8c8c; }
    .sr { width: 79px; background: #3c3c3c; display: flex; align-items: center; justify-content: space-between; padding: 0 6px 0 12px; box-sizing: border-box; flex: none; }
    .sgrip { width: 14px; height: 22px; background: radial-gradient(circle, #999 1px, transparent 1.2px) 0 0 / 4px 4px; }
    .tri-l { border: 7px solid transparent; border-right: 9px solid #ccc; border-left: 0; margin-left: 10px; }
    .tri-r { border: 7px solid transparent; border-left: 9px solid #ccc; border-right: 0; margin-left: auto; margin-right: 14px; }
    .tri-d { border: 6px solid transparent; border-top: 10px solid #ccc; border-bottom: 0; justify-self: start; }
    .dot { width: 16px; height: 24px; border-radius: 50%; background: #5cb030; }
    .right { width: 329px; background: #2e2e2e; flex: none; display: flex; flex-direction: column; }
    .righthead { height: 26px; text-align: right; padding-right: 12px; font-size: 20px; line-height: 20px; color: #bbb; letter-spacing: -2px; flex: none; }
    .dock { flex: 1; background: #484848; margin-left: 3px; }
    .group { border-bottom: 2px solid #2f2f2f; padding: 7px 0 4.75px; display: flex; flex-direction: column; box-sizing: border-box; }
    .group > .grip { align-self: center; margin-bottom: 6px; }
    .item { height: 56px; display: grid; grid-template-columns: 36px 1fr; gap: 17px; align-items: center; padding-left: 19px; font-size: 24px; font-weight: 500; color: #c8c8c8; white-space: nowrap; flex: none; }
    .item.on { background: #2f2f2f; border-radius: 4px; margin: 4px 8px; padding-left: 11px; height: 48px; }
  `;

  private renderHRuler() {
    const w = 2904, origin = 246, step = 141.8, parts = [];
    parts.push(svg`<path d="M0 31.5H${w}" stroke="#8a8a8a" stroke-width="2"/><path d="M8 2v28M1 14h28" stroke="#888" stroke-dasharray="2 2"/><path d="M30 2v30" stroke="#aaa"/>`);
    for (let i = -1; i <= 18; i++) {
      const x = origin + i * step;
      parts.push(svg`<path d="M${x} 2V32" stroke="#b0b0b0" stroke-width="1.5"/><text x=${x + 5} y="22" font-size="22" fill="#c8c8c8" font-family="Liberation Sans" textLength=${Math.abs(i) > 9 ? 20 : 10} lengthAdjust="spacingAndGlyphs">${Math.abs(i)}</text>`);
      for (let k = 1; k < 8; k++) {
        const h = k === 4 ? 13 : k % 2 === 0 ? 8 : 5;
        const px = x + (k * step) / 8;
        if (px < w) parts.push(svg`<path d="M${px} 31V${31 - h}" stroke="#a0a0a0" stroke-width="1.5"/>`);
      }
    }
    return html`<svg class="hr" width=${w} height="33" viewBox="0 0 ${w} 33">${parts}</svg>`;
  }

  private renderVRuler() {
    const h = 1681, origin = 68, step = 141.8, parts = [];
    parts.push(svg`<path d="M29 0V${h}" stroke="#8a8a8a" stroke-width="2"/>`);
    for (let i = 0; i <= 11; i++) {
      const y = origin + i * step;
      parts.push(svg`<path d="M0 ${y}H30" stroke="#b0b0b0" stroke-width="1.5"/>`);
      [...String(i)].forEach((c, n) => parts.push(svg`<text x="9" y=${y + 22 + n * 21} font-size="22" fill="#c8c8c8" font-family="Liberation Sans">${c}</text>`));
    }
    for (let i = -1; i <= 11; i++) {
      for (let k = 1; k < 8; k++) {
        const l = k === 4 ? 13 : k % 2 === 0 ? 8 : 5;
        const y = origin + i * step + (k * step) / 8;
        if (y > 0 && y < h) parts.push(svg`<path d="M29 ${y}H${29 - l}" stroke="#a0a0a0" stroke-width="1.5"/>`);
      }
    }
    return html`<svg class="vr" width="30" height=${h} viewBox="0 0 30 ${h}">${parts}</svg>`;
  }

  private renderMenu() {
    const items = ["File", "Edit", "Layout", "Type", "Object", "Table", "View", "Window", "Help"];
    return html`<div class="menubar">
      <span class="idlogo">Id</span>
      ${items.map((m) => html`<span>${m}</span>`)}
      <i class="msep"></i>
      <div class="bridge">Br</div>
      <div class="bridge">St</div>
      <span>74%</span>
      <i class="tri-d"></i>
      <i class="msep"></i>
      ${ic(52, 40, svg`<rect x="1" y="2" width="36" height="36" fill="#ccc"/><rect x="7" y="11" width="24" height="18" fill="#777"/><path d="M3 6h32M3 34h32" stroke="#444" stroke-width="3" stroke-dasharray="3 3"/><path d="M40 16h12l-6 10z"/>`)}
      ${ic(48, 40, svg`<rect x="3" y="5" width="22" height="30" fill="none" stroke="#ccc" stroke-width="3"/><rect x="8" y="10" width="12" height="20"/><path d="M32 16h12l-6 10z"/>`)}
      ${ic(48, 40, svg`<rect x="1" y="4" width="28" height="32" fill="#ccc"/><rect x="5" y="10" width="10" height="20" fill="#555"/><rect x="18" y="10" width="8" height="8" fill="#555"/><path d="M32 16h12l-6 10z"/>`)}
      <div class="pub">
        ${ic(22, 30, svg`<path d="M11 0l5 8h-4v10h-2V8H6zM2 12h6v2H4v14h14V14h-4v-2h6v18H2z"/>`)}Publish Online
      </div>
      <i class="msep"></i>
      <span class="user">Severus Snape</span>
      <i class="tri-d"></i>
      <i class="msep"></i>
      <div class="search">${ic(18, 26, svg`<circle cx="10" cy="8" r="6" fill="none" stroke="#222" stroke-width="2"/><path d="M7 14L2 25" stroke="#222" stroke-width="2"/>`)}</div>
      <div class="winctl">
        <div>${ic(16, 12, svg`<rect x="1" y="1" width="14" height="10" fill="#eee"/>`)}</div>
        <div>${ic(18, 24, svg`<rect x="6" y="1" width="10" height="14" fill="none" stroke="#eee" stroke-width="3"/><rect x="1" y="8" width="11" height="15" fill="#eee"/><rect x="4" y="12" width="5" height="8" fill="#555"/>`)}</div>
        <div class="close">✕</div>
      </div>
    </div>`;
  }

  private renderControls() {
    const step = html`<div class="step"><i class="u"></i><i class="d"></i></div>`;
    const fld = (v = "") => html`<div class="fld">${v}</div>`;
    const sel = (t: unknown = "", cls = "") => html`<div class="sel ${cls}"><div>${t}</div><i></i></div>`;
    const chain = html`<div class="chain s2">${ic(16, 36, svg`<rect x="2" y="1" width="12" height="18" rx="6" fill="none" stroke="#ddd" stroke-width="3"/><rect x="2" y="17" width="12" height="18" rx="6" fill="none" stroke="#ddd" stroke-width="3"/>`)}</div>`;
    const sep = html`<i class="sep s2"></i>`;
    const ref = [];
    for (let r = 0; r < 3; r++) for (let c = 0; c < 3; c++) ref.push(svg`<rect x=${1 + c * 13} y=${1 + r * 13} width="9" height="9" fill=${r === 1 && c === 1 ? "#ccc" : "none"} stroke="#ccc" stroke-width="1.5"/>`);
    const rot = ic(28, 34, svg`<path d="M8 8A13 13 0 1 0 22 8" fill="none" stroke="#777" stroke-width="2" stroke-dasharray="6 3"/><path d="M14 0l-6 8 8 2z" fill="#777"/>`);
    const tree = ic(30, 36, svg`<path d="M15 0l5 9H10zM14 9h2v12h-2zM5 20h20v3H5zM5 24h4v10H5zM13 24h4v10h-4zM21 24h4v10h-4z" fill="#888"/>`);
    return html`<div class="ctl">
      <div class="s2">${ic(8, 40, svg`<path d="M4 0v40" stroke="#111" stroke-width="6" stroke-dasharray="2 2"/>`)}</div>
      <div class="s2">${ic(38, 38, ref)}</div>
      <span class="lbl">X:</span><span class="lbl">Y:</span>
      ${step}${step}
      ${fld("17.16 in")}${fld("9.22 in")}
      <span class="lbl">W:</span><span class="lbl">H:</span>
      ${step}${step}
      <div class="fld w"></div><div class="fld w"></div>
      ${chain}
      ${sep}
      ${ic(26, 36, svg`<path d="M1 1h24M1 35h24" stroke="#ccc" stroke-width="2" stroke-dasharray="3 1"/><path d="M1 1v34M25 1v34" stroke="#888"/><path d="M3 18h12v-6l8 7-8 7v-6H3z" fill="#ddd"/>`)}
      ${ic(26, 36, svg`<path d="M1 1h24M1 35h24" stroke="#ccc" stroke-width="2" stroke-dasharray="3 1"/><path d="M1 1v34M25 1v34" stroke="#888"/><path d="M13 5v20M7 20l6 10 6-10" stroke="#ddd" stroke-width="2" fill="none"/>`)}
      ${step}${step}
      ${sel("", "dm")}${sel("", "dm")}
      ${chain}
      ${ic(28, 32, svg`<path d="M16 1L3 28h22" fill="none" stroke="#ccc" stroke-width="2"/><path d="M3 30h22" stroke="#eee" stroke-width="3"/>`)}
      ${ic(28, 32, svg`<path d="M9 2h17L19 30H2z" fill="none" stroke="#ccc" stroke-width="2.5"/>`)}
      ${step}${step}
      ${sel("", "dm")}${sel("", "dm")}
      ${sep}
      ${rot}${ic(28, 34, svg`<path d="M4 2l10 14L4 30zM24 2L14 16l10 14z" fill="none" stroke="#777" stroke-width="2"/>`)}
      ${rot}${ic(28, 34, svg`<path d="M6 2h16l-8 12zM6 32h16l-8-12z" fill="#777"/>`)}
      <div class="s2">${ic(40, 60, svg`<path d="M1 8V1h8M1 52v7h8" fill="none" stroke="#888" stroke-width="2"/><text x="10" y="42" font-size="34" font-family="Liberation Serif" fill="#888">P</text>`)}</div>
      ${sep}
      ${tree}${tree}
      ${ic(36, 34, svg`<path d="M1 17l8-8v16zM14 2h3v12h-3zM10 14h12v3H10zM10 18h3v14h-3zM15 18h3v14h-3zM20 18h3v14h-3z" fill="#aaa"/>`)}
      ${ic(36, 34, svg`<path d="M31 17l-6-8v16zM14 2h3v12h-3zM8 14h14v3H8zM8 18h3v14H8zM13 18h3v14h-3zM18 18h3v14h-3z" fill="#aaa"/>`)}
      <div class="swatch"></div>
      ${ic(36, 37, svg`<rect x="1" y="1" width="34" height="35" fill="#fff" stroke="#999"/><rect x="8" y="10" width="14" height="16" fill="#555"/><path d="M4 34L32 3" stroke="#e21b1b" stroke-width="3"/>`)}
      <i class="arrbtn"></i><i class="arrbtn"></i>
      ${sep}
      <div class="inline">${step}${sel("", "lt")}</div>
      <div class="sel lt w169"><div><i class="kfill"></i></div><i></i></div>
      ${sep}
      <div class="fxrow">
        ${ic(26, 36, svg`<rect x="3" y="3" width="17" height="28" fill="none" stroke="#ccc" stroke-width="2" stroke-dasharray="4 2"/>`)}
        ${ic(26, 36, svg`<rect x="4" y="2" width="17" height="26" fill="#777" stroke="#ccc" stroke-width="2"/><rect x="4" y="28" width="17" height="6" fill="#999"/>`)}
        ${ic(34, 40, svg`<text x="2" y="30" font-size="34" font-family="Liberation Serif" font-style="italic" fill="#ccc">fx</text>`)}
      </div>
      <div class="pctrow">
        ${ic(16, 34, svg`<path d="M1 1h14v32H1z" fill="#aaa"/><path d="M4 4h8v11H4zM4 19h8v11H4z" fill="#555"/>`)}
        <div class="fld on pct">100%</div>
        <i class="arrbtn pull"></i>
      </div>
      ${sep}
      <div class="selbg">${ic(30, 40, svg`<path d="M2 2h26v3H2zM2 35h26v3H2zM5 9h20v4H5zM5 17h20v4H5zM5 26h20v4H5z" fill="#ccc"/>`)}</div>
      <div class="ibox">${ic(30, 40, svg`<path d="M2 2h26v3H2zM2 35h26v3H2z" fill="#ccc"/><ellipse cx="15" cy="20" rx="8" ry="11"/>`)}</div>
      <div class="ibox">${ic(30, 40, svg`<path d="M2 2h26v3H2zM2 35h26v3H2z" fill="#ccc"/><rect x="7" y="9" width="16" height="22" fill="none" stroke="#ccc" stroke-width="3" stroke-dasharray="5 2"/>`)}</div>
      <div class="ibox">${ic(30, 40, svg`<path d="M2 2h26v3H2zM2 35h26v3H2z" fill="#ccc"/><rect x="11" y="9" width="8" height="22"/>`)}</div>
      ${sep}
      ${ic(28, 36, svg`<path d="M3 2v10M25 2v10M3 24v10M25 24v10M3 5h22M3 31h22" stroke="#3aa0ee" stroke-width="3" fill="none"/><rect x="7" y="9" width="14" height="18" fill="#777"/>`)}
      <i></i>
      <div class="inline">${step}<div class="fld on">0.1667 in</div></div>
      <div class="sel lt w167"><div class="rule"></div><i></i></div>
      ${sep}
      ${ic(30, 40, svg`<rect x="1" y="2" width="18" height="24" fill="none" stroke="#ccc" stroke-width="5" stroke-dasharray="3 2"/><rect x="1" y="30" width="18" height="6" fill="#aaa"/>`)}
      <i></i>
      <div class="sel lt w355"><div>[Basic Graphics Frame]+</div><i></i></div>
      <div class="endrow">
        ${ic(36, 28, svg`<rect x="1" y="2" width="14" height="24" fill="#777"/><path d="M20 8a7 7 0 1 1 0 14" fill="none" stroke="#777" stroke-width="2"/>`)}
        ${ic(32, 28, svg`<rect x="2" y="5" width="18" height="18" fill="none" stroke="#ccc" stroke-width="3" stroke-dasharray="5 2"/><path d="M24 20L31 6" stroke="#aaa" stroke-width="2"/>`)}
      </div>
      <i class="s2"></i>
      <div class="s2">${ic(20, 58, svg`<path d="M12 2L3 30h8L7 56l10-34H9z"/>`)}</div>
      <div class="s2">${ic(20, 20, svg`<path d="M0 2h20v3H0zM0 9h20v3H0zM0 16h20v3H0z"/>`)}</div>
    </div>`;
  }

  private renderTools() {
    return html`<div class="left">
      <div class="lefthead">&gt;&gt;</div>
      <div class="tools">
        <i class="grip"></i>
        ${toolGroups.map((g, gi) => html`<div class="tg">
          ${g.map((t, i) => html`<div class="tool ${gi === 0 && i === 0 ? "on" : ""}">${ic(40, 30, t)}</div>`)}
        </div>`)}
        <div class="fs">
          <svg width="76" height="100" viewBox="0 0 76 100">
            <defs><linearGradient id="fg"><stop offset="0" stop-color="#eee"/><stop offset="1" stop-color="#555"/></linearGradient></defs>
            <rect x="19" y="8" width="22" height="24" fill="url(#fg)"/>
            <rect x="36" y="19" width="22" height="20" fill="#fff" stroke="#222" stroke-width="3"/><path d="M38 37l18-16" stroke="#e21b1b" stroke-width="3"/>
            <path d="M46 10h12l-4-3M58 10v6" fill="none" stroke="#ccc" stroke-width="2"/>
            <rect x="17" y="44" width="14" height="10" fill="#fff" stroke="#222" stroke-width="2"/><rect x="25" y="48" width="14" height="10" fill="none" stroke="#222" stroke-width="2"/>
            <rect x="9" y="73" width="27" height="24" fill="#333"/><rect x="14" y="78" width="17" height="13" fill="none" stroke="#bbb" stroke-width="2"/>
            <text x="46" y="92" font-family="Liberation Serif" font-size="24" fill="#ccc">T</text>
          </svg>
        </div>
        <div class="dbox first"><svg width="32" height="22" viewBox="0 0 32 22"><rect width="32" height="22" fill="#fff"/><path d="M1 21L31 1" stroke="#e21b1b" stroke-width="3"/></svg></div>
        <div class="dbox">${ic(30, 20, svg`<rect x="1" y="1" width="28" height="18" fill="none" stroke="#ccc" stroke-width="2"/><rect x="6" y="6" width="8" height="3"/><rect x="12" y="10" width="12" height="4"/>`)}</div>
      </div>
    </div>`;
  }

  private renderDock() {
    return html`<div class="right">
      <div class="righthead">&lt;&lt;</div>
      <div class="dock">
        ${dockGroups.map((g) => html`<div class="group">
          <i class="grip"></i>
          ${g.map(([k, label]) => html`<div class="item ${k === "datamerge" ? "on" : ""}">${ic(36, 28, dockIcons[k])}<span>${label}</span></div>`)}
        </div>`)}
      </div>
    </div>`;
  }

  render() {
    return html`
      <div class="banner"><h1>SET UP LAYOUT – ADD CONTENT PLACEHOLDERS</h1></div>
      <div class="win">
        ${this.renderMenu()}
        ${this.renderControls()}
        <div class="main">
          ${this.renderTools()}
          <div class="center">
            <div class="tabs">
              <div class="tab on">*Sac Co Map Composition MD TI.indd @ 74% <b>x</b></div>
              <div class="tab">*Sac Co Map Composition MD TI.indd @ 75% <b>x</b></div>
            </div>
            <div class="doc">
              <div class="docl">
                ${this.renderHRuler()}
                <div class="work">
                  ${this.renderVRuler()}
                  <div class="canvas">
                    <map-sheet></map-sheet>
                    <svg class="cursor" width="28" height="40" viewBox="0 0 28 40"><path d="M3 1v30l7-7 5 13 4-2-5-12h10z" fill="#111" stroke="#444"/></svg>
                  </div>
                </div>
              </div>
              <div class="vs"><div class="thumb"></div><i class="up"></i><i class="dn"></i></div>
            </div>
            <div class="status">
              <div class="sl">
                ${ic(14, 20, svg`<rect width="2" height="20" fill="#888"/><path d="M13 0v20L4 10z" fill="#888"/>`)}
                ${ic(12, 20, svg`<path d="M11 0v20L2 10z" fill="#888"/>`)}
                <span>1</span><i class="tri-d"></i>
                ${ic(12, 20, svg`<path d="M1 0v20l9-10z" fill="#777"/>`)}
                ${ic(14, 20, svg`<path d="M1 0v20l9-10z" fill="#777"/><rect x="11" width="2" height="20" fill="#777"/>`)}
                ${ic(26, 26, svg`<ellipse cx="11" cy="13" rx="10" ry="13" fill="#ccc"/><path d="M8 5v10h8" fill="none" stroke="#333" stroke-width="2"/>`)}
                <span>[Basic] (working)</span><i class="tri-d"></i>
                <i class="dot"></i><span>No errors</span><i class="tri-d"></i>
              </div>
              <div class="strack">
                <i class="tri-l"></i>
                <div class="sthumb"></div>
                <i class="tri-r"></i>
              </div>
              <div class="sr">${ic(24, 24, svg`<rect x="3" y="2" width="16" height="20" fill="none" stroke="#ccc" stroke-width="2"/><path d="M11 2v20" stroke="#ccc" stroke-width="2"/>`)}<i class="sgrip"></i></div>
            </div>
          </div>
          ${this.renderDock()}
        </div>
        <id-panel></id-panel>
      </div>
    `;
  }
}
